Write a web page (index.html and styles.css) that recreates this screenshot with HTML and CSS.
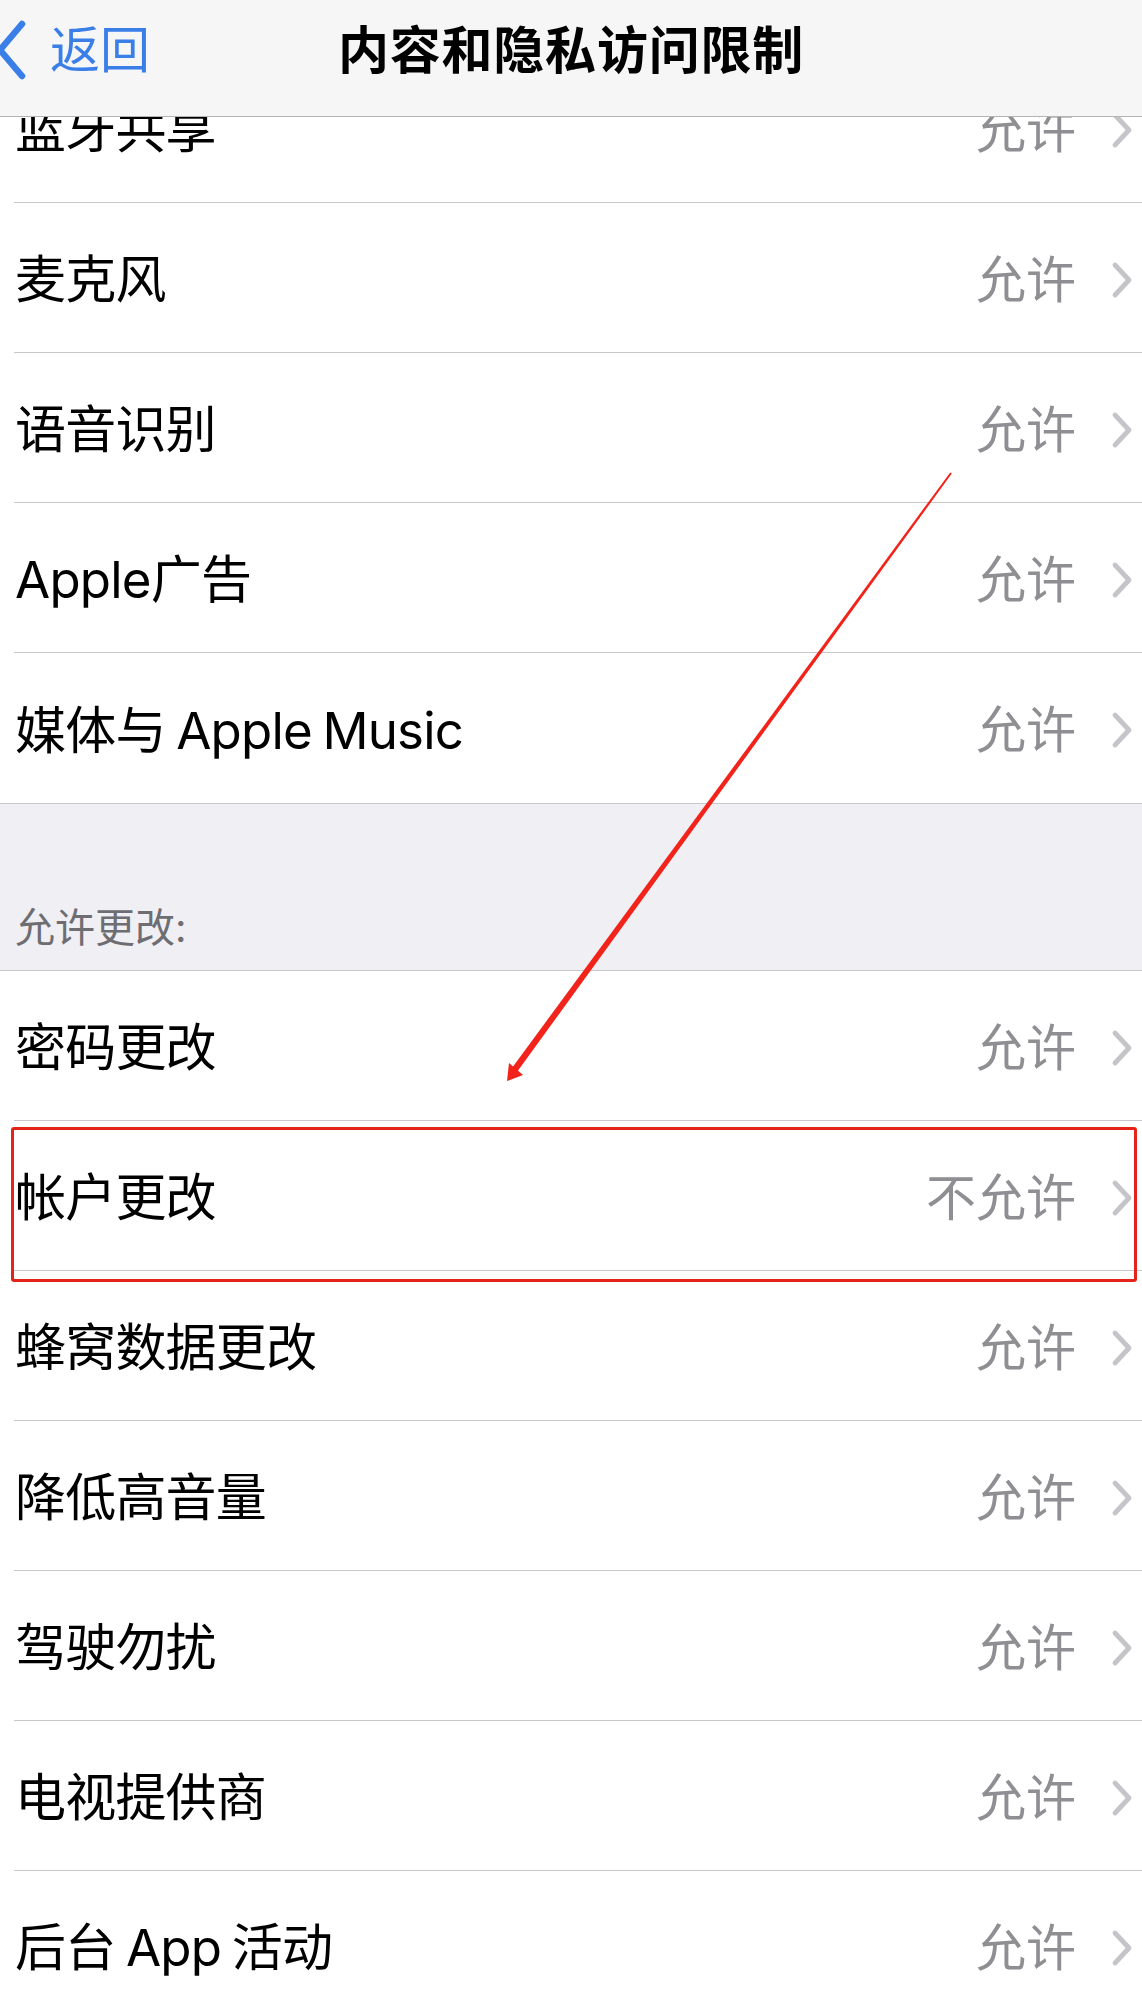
FILE: index.html
```html
<!DOCTYPE html>
<html lang="zh-CN">
<head>
    <meta charset="UTF-8">
    <meta name="viewport" content="width=device-width, initial-scale=1.0">
    <title>内容和隐私访问限制</title>
    <link rel="stylesheet" href="styles.css">
</head>
<body>

    <div class="screen">

        <header class="nav">
            <a class="back" href="#">
                <svg class="back-icon" width="30" height="60" viewBox="0 0 30 60">
                    <polyline points="25,4 3,30 25,56" fill="none" stroke="#3a7ee8" stroke-width="6.5" stroke-linecap="round" stroke-linejoin="round"/>
                </svg>
                <span>返回</span>
            </a>
            <h1 class="nav-title">内容和隐私访问限制</h1>
            <div></div>
        </header>

        <main class="list">
            <ul class="group">
                <li class="row"><span class="label">蓝牙共享</span><span class="value">允许</span><svg class="chevron" width="22" height="38" viewBox="0 0 22 38"><polyline points="4,4 18,19 4,34"/></svg></li>
                <li class="row"><span class="label">麦克风</span><span class="value">允许</span><svg class="chevron" width="22" height="38" viewBox="0 0 22 38"><polyline points="4,4 18,19 4,34"/></svg></li>
                <li class="row"><span class="label">语音识别</span><span class="value">允许</span><svg class="chevron" width="22" height="38" viewBox="0 0 22 38"><polyline points="4,4 18,19 4,34"/></svg></li>
                <li class="row"><span class="label">Apple广告</span><span class="value">允许</span><svg class="chevron" width="22" height="38" viewBox="0 0 22 38"><polyline points="4,4 18,19 4,34"/></svg></li>
                <li class="row"><span class="label">媒体与 Apple Music</span><span class="value">允许</span><svg class="chevron" width="22" height="38" viewBox="0 0 22 38"><polyline points="4,4 18,19 4,34"/></svg></li>
            </ul>

            <div class="section-title">允许更改:</div>

            <ul class="group">
                <li class="row"><span class="label">密码更改</span><span class="value">允许</span><svg class="chevron" width="22" height="38" viewBox="0 0 22 38"><polyline points="4,4 18,19 4,34"/></svg></li>
                <li class="row marked"><span class="label">帐户更改</span><span class="value">不允许</span><svg class="chevron" width="22" height="38" viewBox="0 0 22 38"><polyline points="4,4 18,19 4,34"/></svg></li>
                <li class="row"><span class="label">蜂窝数据更改</span><span class="value">允许</span><svg class="chevron" width="22" height="38" viewBox="0 0 22 38"><polyline points="4,4 18,19 4,34"/></svg></li>
                <li class="row"><span class="label">降低高音量</span><span class="value">允许</span><svg class="chevron" width="22" height="38" viewBox="0 0 22 38"><polyline points="4,4 18,19 4,34"/></svg></li>
                <li class="row"><span class="label">驾驶勿扰</span><span class="value">允许</span><svg class="chevron" width="22" height="38" viewBox="0 0 22 38"><polyline points="4,4 18,19 4,34"/></svg></li>
                <li class="row"><span class="label">电视提供商</span><span class="value">允许</span><svg class="chevron" width="22" height="38" viewBox="0 0 22 38"><polyline points="4,4 18,19 4,34"/></svg></li>
                <li class="row"><span class="label">后台 App 活动</span><span class="value">允许</span><svg class="chevron" width="22" height="38" viewBox="0 0 22 38"><polyline points="4,4 18,19 4,34"/></svg></li>
            </ul>
        </main>

        <!-- hand-drawn pointer from the top list down to the account row -->
        <svg class="arrow" width="1142" height="1997" viewBox="0 0 1142 1997">
            <polygon points="951.8,473.6 950.2,472.4 511.6,1068.4 516.8,1072.2" fill="#f2231a"/>
            <polygon points="507,1081 509,1063 523,1075" fill="#f2231a"/>
        </svg>

    </div>

</body>
</html>
```

FILE: styles.css
```css
body {
    margin: 0;
    background-color: #ffffff;
    font-family: "Inter", "Noto Sans CJK SC", sans-serif;
    color: #000;
}
ul {
    list-style: none;
    margin: 0;
    padding: 0;
}
.screen {
    position: relative;
    width: 1142px;
    height: 1997px;
    overflow: hidden;
}

/* top navigation bar, content scrolls underneath it */
.nav {
    position: fixed;
    top: 0;
    left: 0;
    right: 0;
    z-index: 2;
    height: 100px;
    padding-bottom: 16px;
    display: grid;
    grid-template-columns: 1fr auto 1fr;
    align-items: center;
    background-color: #f6f6f6;
    border-bottom: 1px solid #b4b4b4;
}
.back {
    display: flex;
    align-items: center;
    gap: 23px;
    color: #3a7ee8;
    text-decoration: none;
    font-size: 50px;
    line-height: 1;
}
.back-icon {
    margin-left: -3px;
}
.nav-title {
    margin: 0;
    font-size: 51px;
    font-weight: 600;
    line-height: 1;
    letter-spacing: 0.8px;
}

.list {
    padding-top: 53px;
}
.row {
    position: relative;
    box-sizing: border-box;
    height: 150px;
    margin-left: 14px;
    padding: 4px 9px 0 1px;
    display: flex;
    align-items: center;
    border-bottom: 1px solid #c8c7cc;
    font-size: 50px;
    line-height: 1;
}
.group:first-child .row:last-child {
    border-bottom: none;
}
.label {
    flex: 1;
    white-space: nowrap;
    font-size: 51px;
    letter-spacing: -0.8px;
    word-spacing: -3px;
}
.value {
    color: #8e8e93;
    margin-right: 35px;
}
.chevron {
    fill: none;
    stroke: #c5c5c9;
    stroke-width: 4.8;
    stroke-linecap: round;
    stroke-linejoin: round;
}

.section-title {
    box-sizing: border-box;
    height: 168px;
    padding: 0 0 22px 15px;
    display: flex;
    align-items: flex-end;
    background-color: #efeff4;
    border-top: 1px solid #c8c7cc;
    border-bottom: 1px solid #c8c7cc;
    color: #6d6d72;
    font-size: 40px;
    line-height: 1;
}

/* red frame drawn around the highlighted row */
.marked::after {
    content: "";
    position: absolute;
    top: 6px;
    left: -3px;
    right: 5px;
    bottom: -12px;
    border: 3px solid #e5231b;
    border-radius: 3px;
}

.arrow {
    position: absolute;
    top: 0;
    left: 0;
    z-index: 3;
    pointer-events: none;
}
```
